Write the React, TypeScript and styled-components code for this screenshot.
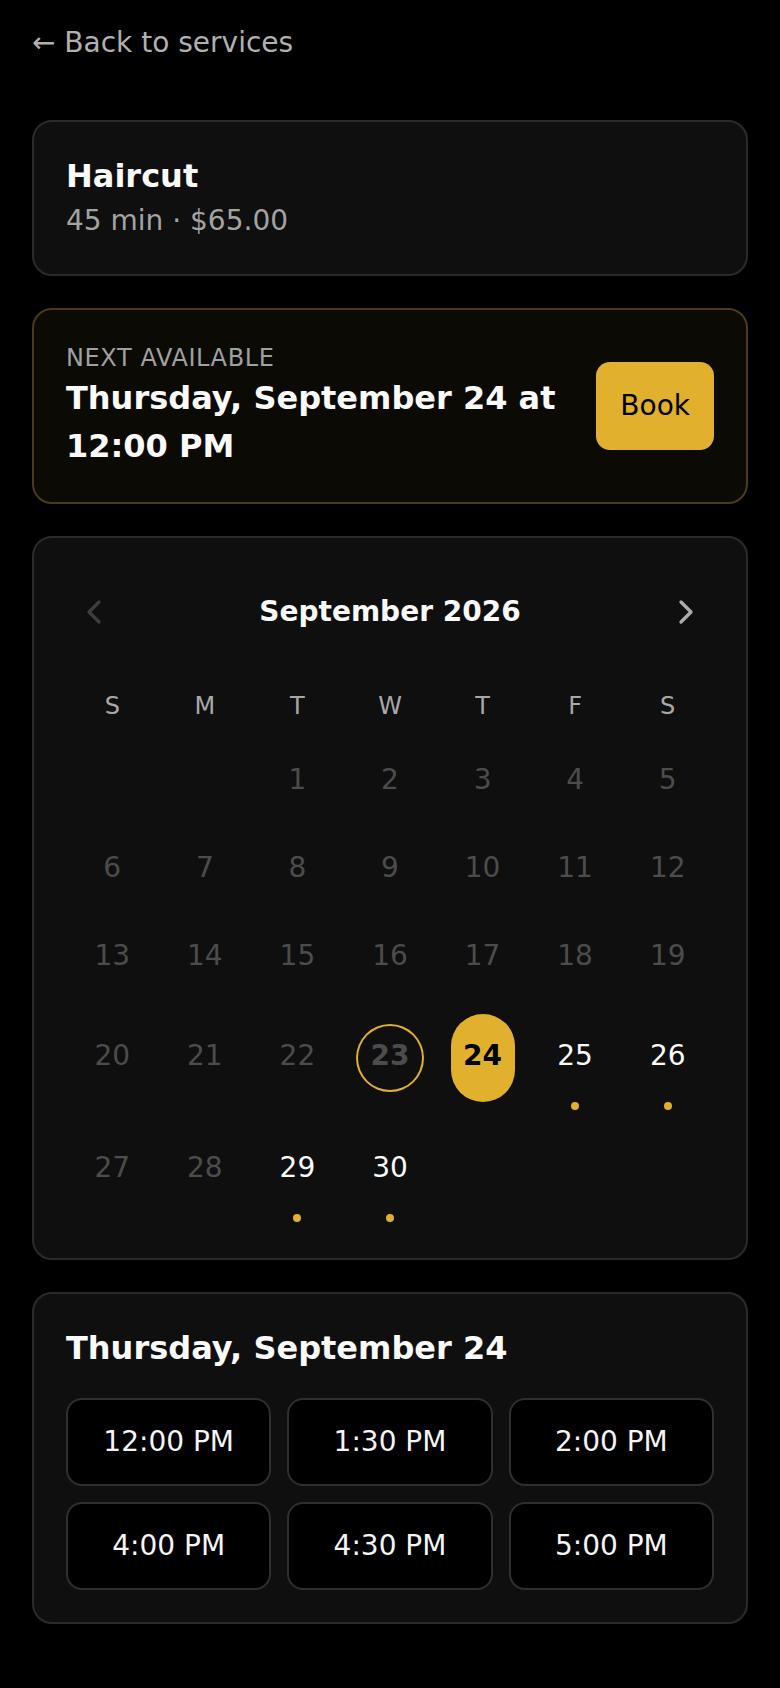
import React from 'react';
import styled, { createGlobalStyle } from 'styled-components';
import { ChevronLeft, ChevronRight } from 'lucide-react';

const GOLD = '#e1b02d';

const GlobalStyle = createGlobalStyle`
  * { box-sizing: border-box; }
  html, body {
    margin: 0;
    padding: 0;
    background: #000;
  }
  body {
    font-family: "DejaVu Sans", "Liberation Sans", sans-serif;
    color: #f5f5f5;
  }
  button { font-family: inherit; }
`;

const Page = styled.div`
  min-height: 1688px;
  padding: 25px 32px 64px;
  display: flex;
  flex-direction: column;
  gap: 32px;
`;

const BackLink = styled.a`
  display: block;
  font-size: 28px;
  line-height: 36px;
  color: #b0b0b0;
  text-decoration: none;
  margin-bottom: 27px;
  cursor: pointer;
`;

const Card = styled.section<{ $accent?: boolean }>`
  background: ${(p) => (p.$accent ? '#0c0a05' : '#0f0f0f')};
  border: 2px solid ${(p) => (p.$accent ? '#4b3c19' : '#2b2b2b')};
  border-radius: 20px;
  padding: 32px;
`;

const ServiceName = styled.h1`
  margin: 0;
  font-size: 32px;
  line-height: 44.8px;
  font-weight: 700;
  color: #fafafa;
`;

const ServiceMeta = styled.p`
  margin: 0;
  font-size: 28px;
  line-height: 43px;
  color: #a3a3a3;
`;

const NextRow = styled.div`
  display: flex;
  align-items: center;
  justify-content: space-between;
  gap: 32px;
`;

const NextLabel = styled.div`
  font-size: 24px;
  line-height: 32px;
  letter-spacing: 0.6px;
  color: #a0a0a0;
  text-transform: uppercase;
`;

const NextDate = styled.div`
  font-size: 32px;
  line-height: 48px;
  font-weight: 700;
  color: #fafafa;
`;

const BookButton = styled.button`
  flex-shrink: 0;
  background: ${GOLD};
  color: #000;
  border: none;
  border-radius: 14px;
  font-size: 28px;
  line-height: 42px;
  padding: 23px 24px;
  cursor: pointer;
`;

const CalendarCard = styled(Card)`
  padding-bottom: 44px;
`;

const MonthHeader = styled.div`
  display: flex;
  align-items: center;
  justify-content: space-between;
  height: 84px;
  margin-bottom: 33px;
`;

const NavButton = styled.button<{ $muted?: boolean }>`
  width: 56px;
  height: 84px;
  display: flex;
  align-items: center;
  justify-content: center;
  background: transparent;
  border: none;
  padding: 0;
  color: ${(p) => (p.$muted ? '#3d3d3d' : '#ababab')};
  cursor: ${(p) => (p.$muted ? 'default' : 'pointer')};
`;

const MonthTitle = styled.h2`
  margin: 0;
  font-size: 28px;
  font-weight: 700;
  color: #fafafa;
`;

const DayGrid = styled.div`
  display: grid;
  grid-template-columns: repeat(7, 1fr);
  row-gap: 24px;
  align-items: center;
  justify-items: center;
`;

const Weekday = styled.div`
  font-size: 24px;
  line-height: 39px;
  color: #a8a8a8;
  text-align: center;
`;

type DayState = 'past' | 'open' | 'selected' | 'today';

const DayButton = styled.button<{ $state: DayState }>`
  position: relative;
  width: 64px;
  height: ${(p) => (p.$state === 'open' || p.$state === 'selected' ? '88px' : '64px')};
  display: flex;
  align-items: center;
  justify-content: center;
  padding: 0 0 4px;
  border: none;
  border-radius: 32px;
  font-size: 28px;
  line-height: 34px;
  font-weight: ${(p) => (p.$state === 'selected' || p.$state === 'today' ? 700 : 400)};
  background: ${(p) => (p.$state === 'selected' ? GOLD : 'transparent')};
  color: ${(p) =>
    p.$state === 'selected' ? '#000' : p.$state === 'open' ? '#fafafa' : '#4c4c4c'};
  box-shadow: ${(p) => (p.$state === 'today' ? `0 0 0 2px ${GOLD}` : 'none')};
  cursor: ${(p) => (p.$state === 'past' || p.$state === 'today' ? 'default' : 'pointer')};
`;

const Dot = styled.span`
  position: absolute;
  top: 100%;
  left: 50%;
  width: 8px;
  height: 8px;
  margin: 0 0 0 -4px;
  border-radius: 50%;
  background: ${GOLD};
`;

const SlotsTitle = styled.h3`
  margin: 0 0 27px;
  font-size: 32px;
  line-height: 44.8px;
  font-weight: 700;
  color: #fafafa;
`;

const SlotGrid = styled.div`
  display: grid;
  grid-template-columns: repeat(3, 1fr);
  column-gap: 16px;
  row-gap: 16px;
`;

const Slot = styled.button`
  background: #000;
  border: 2px solid #2f2f2f;
  border-radius: 16px;
  padding: 21px 8px;
  font-size: 28px;
  line-height: 42px;
  color: #f5f5f5;
  text-align: center;
  cursor: pointer;
`;

const weekdays = ['S', 'M', 'T', 'W', 'T', 'F', 'S'];
const openDays = [24, 25, 26, 29, 30];
const selectedDay = 24;
const today = 23;
const firstWeekday = 2; // Sept 1, 2026 is a Tuesday
const slots = ['12:00 PM', '1:30 PM', '2:00 PM', '4:00 PM', '4:30 PM', '5:00 PM'];

function dayState(day: number): DayState {
  if (day === selectedDay) return 'selected';
  if (day === today) return 'today';
  if (openDays.includes(day)) return 'open';
  return 'past';
}

export default function App() {
  const days = Array.from({ length: 30 }, (_, i) => i + 1);

  return (
    <>
      <GlobalStyle />
      <Page>
        <BackLink>← Back to services</BackLink>

        <Card>
          <ServiceName>Haircut</ServiceName>
          <ServiceMeta>45 min · $65.00</ServiceMeta>
        </Card>

        <Card $accent>
          <NextRow>
            <div>
              <NextLabel>Next available</NextLabel>
              <NextDate>Thursday, September 24 at 12:00 PM</NextDate>
            </div>
            <BookButton>Book</BookButton>
          </NextRow>
        </Card>

        <CalendarCard>
          <MonthHeader>
            <NavButton $muted aria-label="Previous month">
              <ChevronLeft size={40} strokeWidth={2} />
            </NavButton>
            <MonthTitle>September 2026</MonthTitle>
            <NavButton aria-label="Next month">
              <ChevronRight size={40} strokeWidth={2} />
            </NavButton>
          </MonthHeader>

          <DayGrid>
            {weekdays.map((d, i) => (
              <Weekday key={i}>{d}</Weekday>
            ))}
            {Array.from({ length: firstWeekday }, (_, i) => (
              <div key={`empty-${i}`} />
            ))}
            {days.map((day) => {
              const state = dayState(day);
              return (
                <DayButton key={day} $state={state}>
                  {day}
                  {state === 'open' && <Dot />}
                </DayButton>
              );
            })}
          </DayGrid>
        </CalendarCard>

        <Card>
          <SlotsTitle>Thursday, September 24</SlotsTitle>
          <SlotGrid>
            {slots.map((s) => (
              <Slot key={s}>{s}</Slot>
            ))}
          </SlotGrid>
        </Card>
      </Page>
    </>
  );
}
